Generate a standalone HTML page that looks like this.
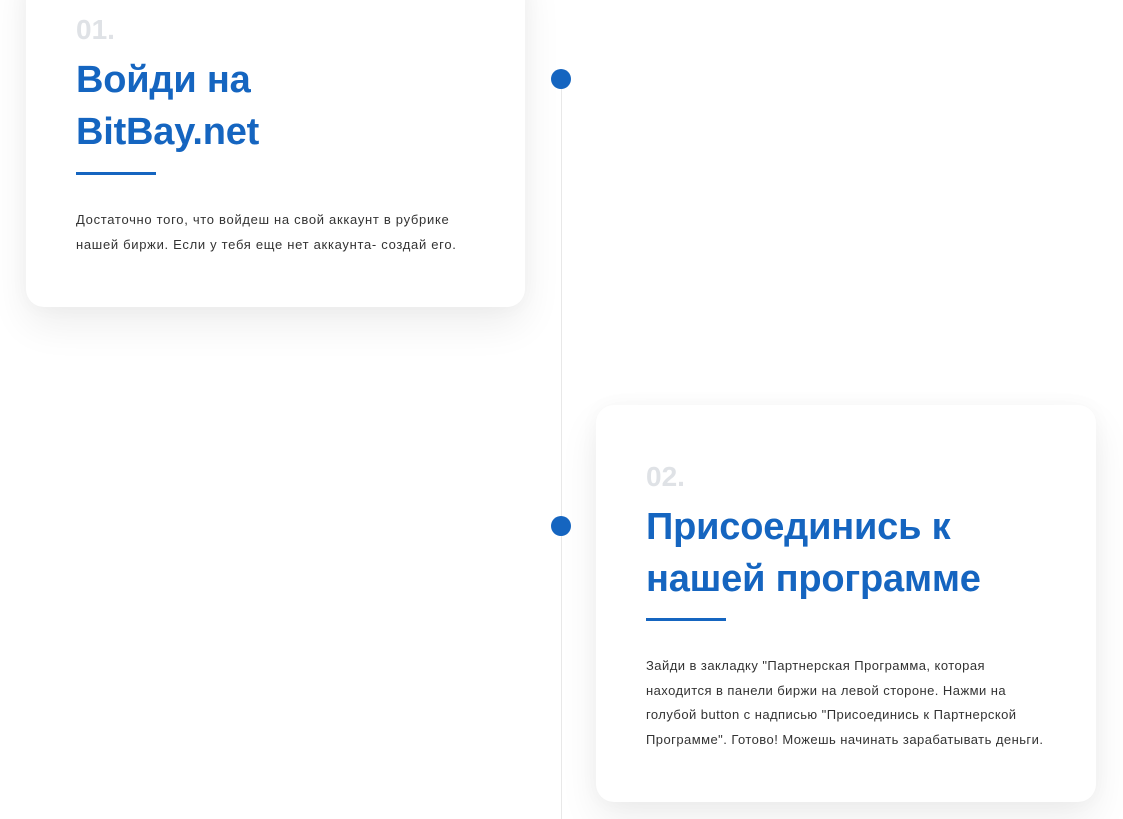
<!DOCTYPE html>
<html><head><meta charset="utf-8"><style>
body{margin:0;width:1123px;height:813px;background:#fff;position:relative;overflow:hidden;font-family:"Liberation Sans",sans-serif}
.card{position:absolute;background:#fff;border-radius:18px;box-shadow:0 18px 40px rgba(0,0,0,0.07),0 0 20px rgba(0,0,0,0.03)}
.num{position:absolute;font-size:28px;font-weight:bold;color:#dfe2e6}
.t{position:absolute;font-size:38px;font-weight:bold;color:#1565c0;line-height:52px;margin:0;letter-spacing:-0.2px}
.bar{position:absolute;width:80px;height:3px;background:#1565c0}
.p{position:absolute;font-size:13px;color:#333;line-height:24.5px;margin:0;letter-spacing:0.45px;white-space:nowrap}
.line{position:absolute;left:561px;top:79px;width:1px;height:740px;background:#e8e8e8}
.dot{position:absolute;width:20px;height:20px;border-radius:50%;background:#1565c0}
</style></head><body>
<div class="line"></div>
<div class="card" style="left:26px;top:-40px;width:499px;height:347px"></div>
<div class="card" style="left:596px;top:405px;width:500px;height:397px"></div>
<div class="dot" style="left:551px;top:69px"></div>
<div class="dot" style="left:551px;top:516px"></div>
<div class="num" style="left:76px;top:14px">01.</div>
<h1 class="t" style="left:76px;top:54px">Войди на<br>BitBay.net</h1>
<div class="bar" style="left:76px;top:172px"></div>
<p class="p" style="left:76px;top:208px;letter-spacing:0.7px">Достаточно того, что войдеш на свой аккаунт в рубрике<br>нашей биржи. Если у тебя еще нет аккаунта- создай его.</p>
<div class="num" style="left:646px;top:461px">02.</div>
<h1 class="t" style="left:646px;top:501px">Присоединись к<br>нашей программе</h1>
<div class="bar" style="left:646px;top:618px"></div>
<p class="p" style="left:646px;top:654px">Зайди в закладку "Партнерская Программа, которая<br>находится в панели биржи на левой стороне. Нажми на<br>голубой button с надписью "Присоединись к Партнерской<br>Программе". Готово! Можешь начинать зарабатывать деньги.</p>
</body></html>
